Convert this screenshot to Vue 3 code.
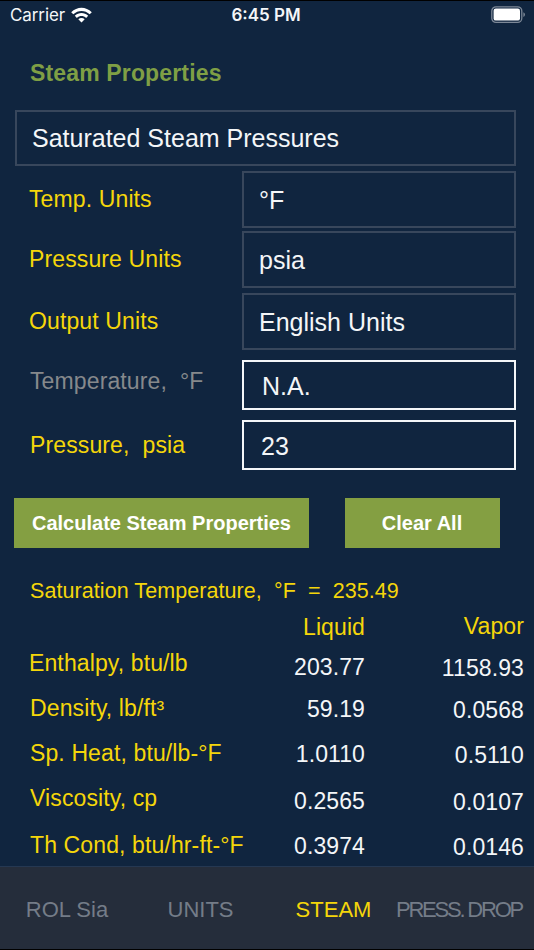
<template>
  <div class="screen">
    <header class="status-bar">
      <div class="carrier">
        <span>Carrier</span>
        <svg class="wifi" width="21" height="16" viewBox="0 0 21 16">
          <path d="M0.2 5.2 C6 -0.9 15 -0.9 20.8 5.2 L18.7 7.3 C14 2.8 7 2.8 2.3 7.3 Z" />
          <path d="M3.8 8.8 C7.6 5 13.4 5 17.2 8.8 L15.1 10.9 C12.4 8.3 8.6 8.3 5.9 10.9 Z" />
          <path d="M7.3 12.3 C9.1 10.6 11.9 10.6 13.7 12.3 L10.5 15.5 Z" />
        </svg>
      </div>
      <span class="clock">6:45 PM</span>
      <svg class="battery" width="35" height="18" viewBox="0 0 35 18">
        <rect x="0.8" y="0.8" width="30" height="15.6" rx="4.2" class="battery-case" />
        <rect x="2.6" y="2.6" width="26.4" height="12" rx="2.2" fill="#fff" />
        <path d="M32.4 6.2 Q34 7 34 8.6 Q34 10.2 32.4 11 Z" fill="#7d8897" />
      </svg>
    </header>

    <main>
      <h1 class="title">Steam Properties</h1>

      <select v-model="mode" class="field mode">
        <option>Saturated Steam Pressures</option>
      </select>

      <div v-for="unit in units" :key="unit.label" class="form-row" :class="unit.id">
        <label>{{ unit.label }}</label>
        <select v-model="unit.value" class="field">
          <option>{{ unit.value }}</option>
        </select>
      </div>

      <div class="form-row temperature disabled">
        <label>Temperature,&nbsp; °F</label>
        <input v-model="temperature" class="field" readonly />
      </div>
      <div class="form-row pressure">
        <label>Pressure,&nbsp; psia</label>
        <input v-model="pressure" class="field" />
      </div>

      <div class="actions">
        <button class="btn calculate">Calculate Steam Properties</button>
        <button class="btn clear" @click="clearAll">Clear All</button>
      </div>

      <p class="saturation">Saturation Temperature,&nbsp; °F&nbsp; =&nbsp; 235.49</p>

      <div class="results">
        <div class="result head">
          <span></span>
          <span class="liquid">Liquid</span>
          <span class="vapor">Vapor</span>
        </div>
        <div v-for="r in results" :key="r.id" class="result" :class="r.id">
          <span class="name">{{ r.name }}</span>
          <span class="liquid">{{ r.liquid }}</span>
          <span class="vapor">{{ r.vapor }}</span>
        </div>
      </div>
    </main>

    <nav class="tabs">
      <a
        v-for="tab in tabs"
        :key="tab.id"
        :class="[tab.id, { active: tab.id === activeTab }]"
        @click="activeTab = tab.id"
      >{{ tab.label }}</a>
    </nav>
  </div>
</template>

<script setup>
import { ref } from 'vue';

const mode = ref('Saturated Steam Pressures');
const temperature = ref('N.A.');
const pressure = ref('23');
const activeTab = ref('steam');

const units = ref([
  { id: 'temp-unit', label: 'Temp. Units', value: '°F' },
  { id: 'pressure-unit', label: 'Pressure Units', value: 'psia' },
  { id: 'output-unit', label: 'Output Units', value: 'English Units' }
]);

const results = ref([
  { id: 'enthalpy', name: 'Enthalpy, btu/lb', liquid: '203.77', vapor: '1158.93' },
  { id: 'density', name: 'Density, lb/ft³', liquid: '59.19', vapor: '0.0568' },
  { id: 'heat', name: 'Sp. Heat, btu/lb-°F', liquid: '1.0110', vapor: '0.5110' },
  { id: 'viscosity', name: 'Viscosity, cp', liquid: '0.2565', vapor: '0.0107' },
  { id: 'conductivity', name: 'Th Cond, btu/hr-ft-°F', liquid: '0.3974', vapor: '0.0146' }
]);

const tabs = [
  { id: 'sia', label: 'ROL Sia' },
  { id: 'units', label: 'UNITS' },
  { id: 'steam', label: 'STEAM' },
  { id: 'drop', label: 'PRESS. DROP' }
];

function clearAll() {
  pressure.value = '';
  results.value.forEach(r => {
    r.liquid = '';
    r.vapor = '';
  });
}
</script>

<style>
body {
  background: #10253f;
}
</style>

<style scoped>
.screen {
  display: flex;
  flex-direction: column;
  box-sizing: border-box;
  width: 534px;
  height: 950px;
  overflow: hidden;
  border-top: 1px solid #000;
  border-bottom: 1px solid #000;
  background: #10253f;
  color: #f4f6f8;
  font-family: "Liberation Sans", Arial, sans-serif;
  font-size: 23px;
  white-space: nowrap;
}

.status-bar {
  display: grid;
  grid-template-columns: 1fr auto 1fr;
  align-items: center;
  height: 28px;
  padding: 0 8px 0 10px;
  font-family: Inter, sans-serif;
  font-size: 17px;
}

.carrier {
  display: flex;
  align-items: center;
  gap: 6px;
  letter-spacing: -0.1px;
}

.wifi {
  fill: #fff;
}

.clock {
  margin-right: 4px;
  font-weight: 600;
}

.battery {
  justify-self: end;
}

.battery-case {
  fill: none;
  stroke: #7d8897;
  stroke-width: 1.3;
}

main {
  flex: none;
  height: 837px;
}

.title {
  margin: 30px 0 0 30px;
  color: #7f9f45;
  font-size: 23px;
  line-height: 28px;
  letter-spacing: 0.15px;
}

.field {
  appearance: none;
  box-sizing: border-box;
  display: block;
  width: 274px;
  height: 57px;
  margin: 0;
  padding: 0 15px;
  border: 2px solid #38475c;
  border-radius: 0;
  outline: none;
  background: transparent;
  color: #f4f6f8;
  font: 25px "Liberation Sans", Arial, sans-serif;
}

.mode {
  width: 501px;
  height: 56px;
  margin: 23px 0 5px 15px;
}

.form-row {
  display: grid;
  grid-template-columns: 213px 274px;
  align-items: center;
  height: 57px;
  padding-left: 29px;
  color: #f5d60a;
  letter-spacing: 0.12px;
}

.temp-unit {
  margin-bottom: 3px;
}

.pressure-unit {
  margin-bottom: 5px;
}

.pressure-unit .field {
  padding-top: 1px;
}

.output-unit {
  margin-bottom: 10px;
}

.temperature,
.pressure {
  height: 50px;
  padding-left: 30px;
  grid-template-columns: 212px 274px;
}

.temperature .field,
.pressure .field {
  height: 50px;
  padding: 2px 17px 0 18px;
  border-color: #f4f6f8;
}

.pressure .field {
  padding-left: 17px;
}

.temperature {
  margin-bottom: 10px;
}

.temperature label {
  padding-bottom: 7px;
}

.disabled {
  color: #86898c;
}

.actions {
  display: flex;
  gap: 36px;
  margin: 28px 0 0 14px;
}

.btn {
  height: 50px;
  padding: 0;
  border: 0;
  background: #849f42;
  color: #fff;
  font: bold 20px "Liberation Sans", Arial, sans-serif;
}

.calculate {
  width: 295px;
}

.clear {
  width: 155px;
  padding-right: 1px;
}

.saturation {
  margin: 30px 0 0 30px;
  color: #f5d60a;
  font-size: 21.5px;
  line-height: 26px;
  letter-spacing: 0.07px;
}

.result {
  display: grid;
  grid-template-columns: 200px 135px 159px;
  align-items: baseline;
  height: 46px;
  padding-left: 30px;
  line-height: 26px;
}

.head {
  height: 37px;
  padding-top: 10px;
  box-sizing: border-box;
  margin-bottom: 13px;
  color: #f5d60a;
}

.name {
  position: relative;
  top: -1px;
  color: #f5d60a;
  letter-spacing: 0.12px;
}

.liquid,
.vapor {
  text-align: right;
  letter-spacing: 0.1px;
}

.vapor {
  position: relative;
  top: 1px;
}

.head .vapor {
  top: -1px;
}

.enthalpy {
  height: 42px;
}

.enthalpy .name {
  top: -4px;
  left: -1px;
}

.density {
  height: 45px;
}

.heat {
  height: 47px;
}

.viscosity {
  height: 45px;
}

.viscosity .name {
  top: -3px;
}

.tabs {
  display: grid;
  grid-template-columns: 134px 133px 133px 118px;
  flex: 1;
  align-items: center;
  border-top: 1px solid #253852;
  background: #252d3b;
  color: #747c88;
  font-size: 22px;
  text-align: center;
}

.tabs a {
  padding-top: 4px;
  cursor: pointer;
}

.tabs .active {
  color: #f5d60a;
}

/* the label is wider than its tab, so it is tightened and centred by hand */
.tabs .drop {
  justify-self: center;
  letter-spacing: -2.2px;
}
</style>
